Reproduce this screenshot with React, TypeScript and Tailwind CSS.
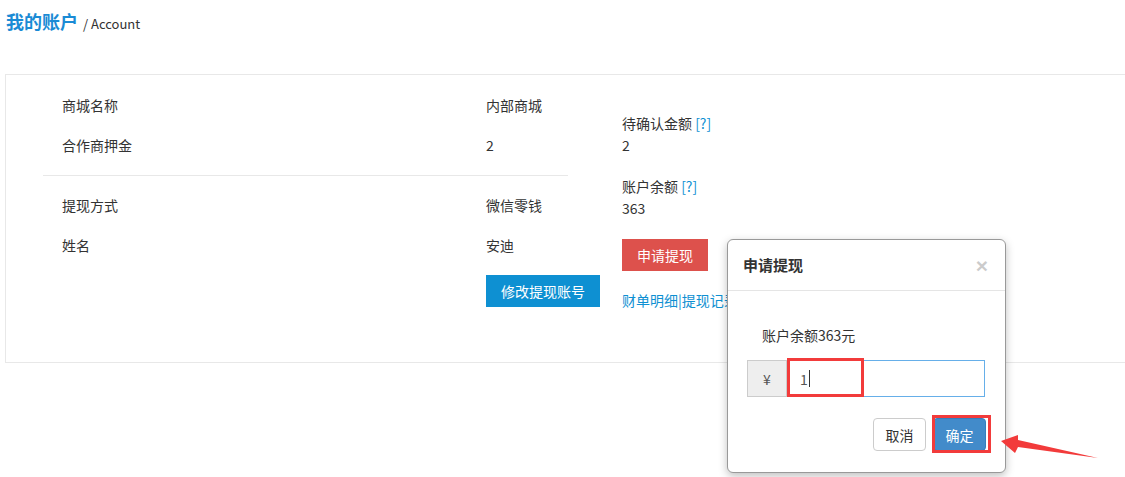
import React from "react";

export default function App() {
  const font = { fontFamily: '"Noto Sans CJK SC", "Noto Sans", sans-serif' };
  return (
    <div
      className="relative w-[1125px] h-[477px] overflow-hidden bg-white text-[#333] text-[14px] leading-[22px]"
      style={font}
    >
      {/* Title */}
      <div className="h-[74px] pt-[9px] pl-[6px] flex items-baseline">
        <span className="text-[18px] leading-[24px] font-bold text-[#1a8bd5]">我的账户</span>
        <span className="ml-[5px] text-[13px] leading-[24px] text-[#333]">/ Account</span>
      </div>

      {/* Panel */}
      <div className="ml-[5px] w-[1200px] h-[289px] border border-[#e8e8e8] flex">
        {/* left */}
        <div className="ml-[37px] w-[525px] pt-[11px]">
          <div className="h-10 pb-[3px] flex items-center">
            <span className="pl-[19px] w-[443px]">商城名称</span>
            <span>内部商城</span>
          </div>
          <div className="h-10 pb-[3px] flex items-center">
            <span className="pl-[19px] w-[443px]">合作商押金</span>
            <span>2</span>
          </div>
          <div className="mt-[9px] border-t border-[#e8e8e8]" />
          <div className="mt-[10px] h-10 pb-[3px] flex items-center">
            <span className="pl-[19px] w-[443px]">提现方式</span>
            <span>微信零钱</span>
          </div>
          <div className="h-10 pb-[3px] flex items-center">
            <span className="pl-[19px] w-[443px]">姓名</span>
            <span>安迪</span>
          </div>
          <div className="mt-[9px] ml-[443px] w-[114px] h-[32px] bg-[#0e90d2] text-white flex items-center justify-center">
            修改提现账号
          </div>
        </div>

        {/* right */}
        <div className="ml-[54px] pt-[37px]">
          <div>
            待确认金额 <span className="text-[#0e90d2]">[?]</span>
          </div>
          <div>2</div>
          <div className="mt-[19px]">
            账户余额 <span className="text-[#0e90d2]">[?]</span>
          </div>
          <div>363</div>
          <div className="mt-[20px] w-[86px] h-[32px] bg-[#dd514c] text-white flex items-center justify-center">
            申请提现
          </div>
          <div className="mt-[18px] text-[#0e90d2] whitespace-nowrap">财单明细|提现记录</div>
        </div>
      </div>

      {/* Modal */}
      <div className="absolute left-[727px] top-[239px] w-[279px] h-[234px] bg-white border border-[#999] rounded-[6px] shadow-[0_3px_9px_rgba(0,0,0,0.25)]">
        <div className="h-[51px] border-b border-[#e5e5e5] pl-[15px] pr-[17px] flex items-center justify-between">
          <span className="text-[15px] font-bold text-[#333]">申请提现</span>
          <span
            className="text-[21px] font-bold leading-none text-black opacity-20"
            style={{ fontFamily: '"Liberation Sans", Arial, sans-serif' }}
          >
            ×
          </span>
        </div>
        <div className="pt-[33px] pl-[34px]">账户余额363元</div>
        <div className="relative mt-[14px] ml-[19px] w-[238px] h-[37px] flex">
          <div className="w-[40px] h-full bg-[#eeeeee] border border-[#cccccc] flex items-center justify-center text-[#555]">
            ¥
          </div>
          <div className="flex-1 h-full border border-[#66afe9] flex items-center pl-[12px] text-[#555]">
            <span>1</span>
            <span className="ml-[1px] w-px h-[17px] bg-[#333]" />
          </div>
          <div className="absolute left-[40px] top-[-2px] w-[77px] h-[39px] border-[3px] border-[#f23b3b]" />
        </div>
        <div className="relative mt-[21px] pr-[19px] flex justify-end gap-[7px]">
          <div className="w-[53px] h-[33px] border border-[#ccc] rounded-[4px] bg-white flex items-center justify-center text-[#333]">
            取消
          </div>
          <div className="w-[53px] h-[33px] border border-[#357ebd] rounded-[4px] bg-[#428bca] flex items-center justify-center text-white">
            确定
          </div>
          <div className="absolute right-[14px] top-[-3px] w-[59px] h-[38px] border-[3px] border-[#f23b3b]" />
        </div>
      </div>

      {/* Arrow */}
      <svg className="absolute left-0 top-0" width="1125" height="477" viewBox="0 0 1125 477">
        <polygon
          points="1001,441 1018,435 1018,440 1098,458 1018,447 1015,453"
          fill="#f23b3b"
        />
      </svg>
    </div>
  );
}
